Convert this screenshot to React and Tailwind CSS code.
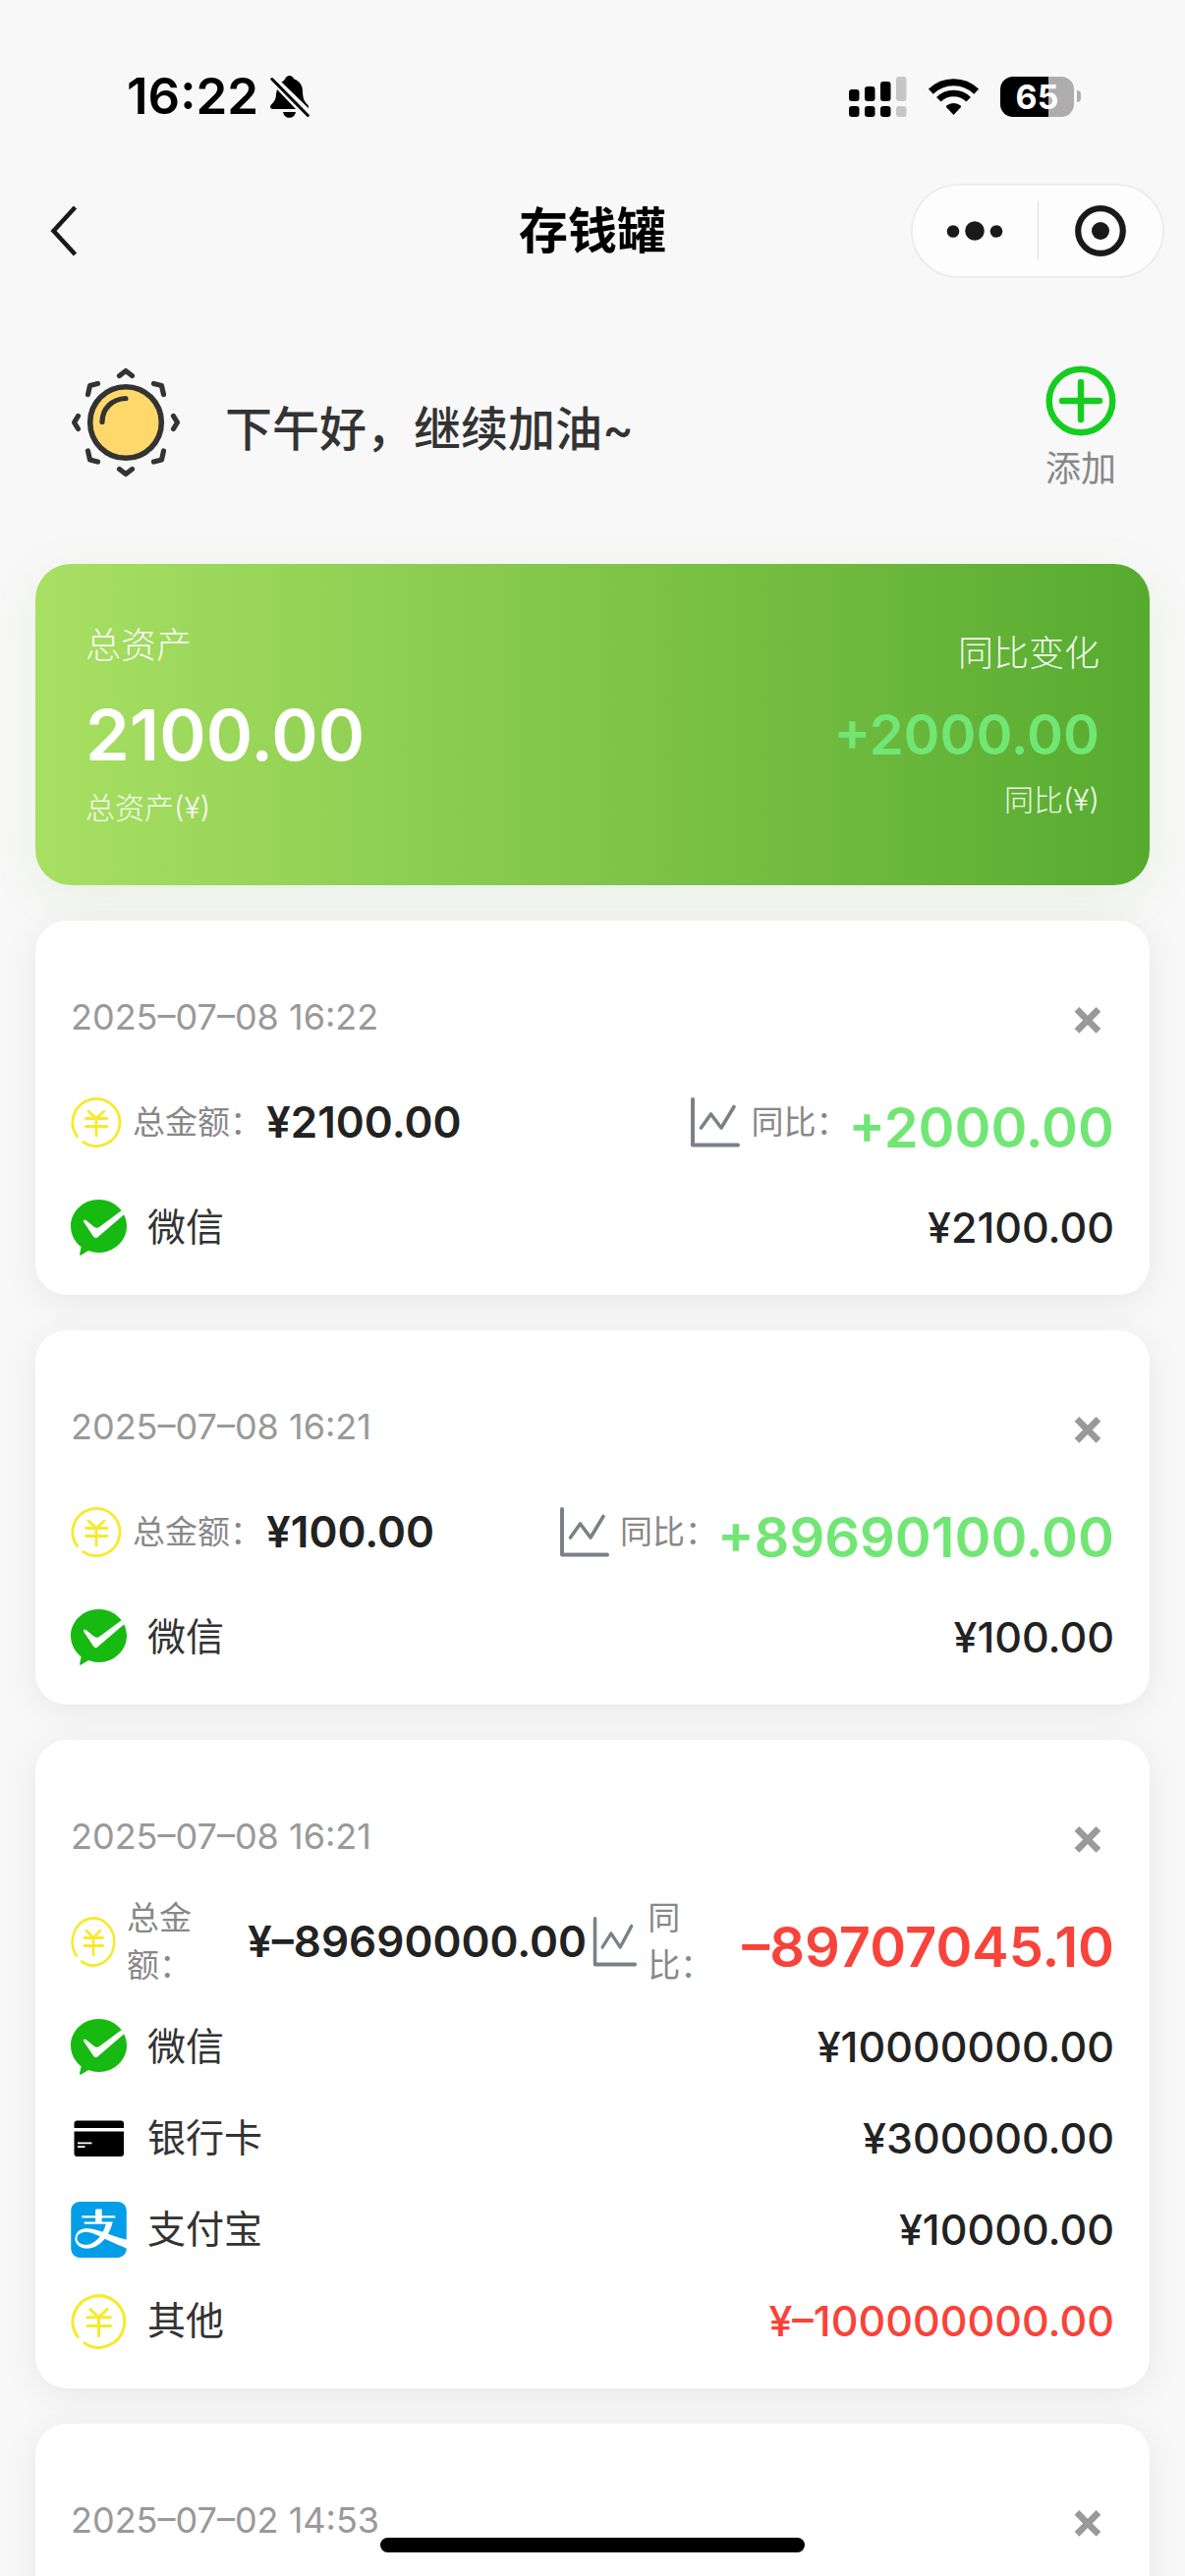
import React from "react";
import { SiAlipay } from "react-icons/si";

const YenIcon = ({ className }) => (
  <svg viewBox="0 0 52 52" preserveAspectRatio="none" className={className} fill="none" stroke="#f6ea2a" strokeWidth="2.8" strokeLinecap="round" aria-hidden="true">
    <path d="M6.6 40.7A24 24 0 1 1 12.7 46.5" />
    <path d="M18 15L26 22.5L34 15M15.5 22.5H37M15.5 30.5H37M26 22.5V40" />
  </svg>
);

const ChartIcon = ({ className }) => (
  <svg viewBox="0 0 52 52" preserveAspectRatio="none" className={className} fill="none" stroke="#7a8186" strokeLinecap="round" strokeLinejoin="round" aria-hidden="true">
    <path strokeWidth="4" d="M4 3V49.5H50" />
    <path strokeWidth="3.6" d="M12.5 32L22.5 18L33 32L46 10.5" />
  </svg>
);

const WechatPayIcon = () => (
  <svg viewBox="0 0 57 57" className="size-[57px]" aria-hidden="true">
    <path fill="#16ba10" d="M28.5 0C44.2 0 57 12.1 57 27S44.2 54 28.5 54C24.8 54 21.3 53.4 18 52.1L10.5 56.6Q9 57.3 9.1 55.5L10.6 48.2C4.1 43.2 0 35.5 0 27C0 12.1 12.8 0 28.5 0Z" />
    <path fill="#fff" d="M13 22.5Q12.8 19.5 15.5 21L23.8 27.8Q26.3 29.5 29 28L51.5 11.2L54.3 15.2L27.5 38.3Q24.9 40.3 23 37.5Z" />
  </svg>
);

const BankCardIcon = () => (
  <svg viewBox="0 0 57 57" className="size-[57px]" aria-hidden="true">
    <rect x="3.5" y="10.5" width="50.5" height="36.5" rx="3" />
    <path fill="#fff" d="M3 18H55V21.4H3ZM7 32.5H21.5V34.2H7ZM7 36.3H14.5V38H7Z" />
  </svg>
);

const channelIcons = {
  微信: <WechatPayIcon />,
  银行卡: <BankCardIcon />,
  支付宝: <SiAlipay className="size-[57px] text-[#029fe8]" aria-hidden="true" />,
  其他: <YenIcon className="size-[57px]" />,
};

const records = [
  { date: "2025–07–08 16:22", total: "¥2100.00", diff: "+2000.00", items: [["微信", "¥2100.00"]] },
  { date: "2025–07–08 16:21", total: "¥100.00", diff: "+89690100.00", items: [["微信", "¥100.00"]] },
  {
    date: "2025–07–08 16:21",
    total: "¥–89690000.00",
    diff: "–89707045.10",
    tight: true,
    items: [
      ["微信", "¥10000000.00"],
      ["银行卡", "¥300000.00"],
      ["支付宝", "¥10000.00"],
      ["其他", "¥–100000000.00"],
    ],
  },
  { date: "2025–07–02 14:53", items: [] },
];

function StatusBar() {
  return (
    <div className="flex h-[187px] shrink-0 items-start justify-between pt-[68px] pr-[106px] pl-[129px]">
      <div className="flex h-[60px] items-center gap-3">
        <span className="text-[51px] leading-[60px] font-semibold text-black">16:22</span>
        <svg viewBox="0 0 40 43" className="h-[43px] w-10" aria-hidden="true">
          <path d="M11.5 6.5C13.5 5.3 14.5 4.8 15 3.5C16 1.2 17.6 0 19.6 0S23.3 1.2 24.3 3.5C30 5.5 33 10 33 16C33.2 24 35 26.5 38 29.5C39 30.7 39.3 32 38.8 33Z" />
          <path d="M7 14L26 34H3C0 34-.7 31.5 1 29.5C4.5 26 5.8 24 6 18.5Z" />
          <path d="M13 37H26C25.3 40.7 22.8 42.8 19.5 42.8S13.7 40.7 13 37Z" />
          <path d="M1.8 3.5L38.3 40.5" stroke="#000" strokeWidth="3" strokeLinecap="round" />
        </svg>
      </div>
      <div className="flex h-[60px] items-center">
        <svg viewBox="0 0 59 41" className="h-[41px] w-[59px]" aria-hidden="true">
          <rect x="0" y="13" width="10.5" height="12" rx="3" />
          <rect x="16" y="10" width="10.5" height="15" rx="3" />
          <rect x="32" y="5" width="10.5" height="20" rx="3" />
          <rect x="0" y="30" width="10.5" height="11" rx="3" />
          <rect x="16" y="30" width="10.5" height="11" rx="3" />
          <rect x="32" y="30" width="10.5" height="11" rx="3" />
          <g fill="#c6c6c6">
            <rect x="48" y="0" width="10.5" height="25" rx="3" />
            <rect x="48" y="30" width="10.5" height="11" rx="3" />
          </g>
        </svg>
        <svg viewBox="0 0 51 38" className="ml-[22px] h-[38px] w-[51px]" fill="none" stroke="#000" aria-hidden="true">
          <path strokeWidth="7" d="M2.3 14.2A33 33 0 0 1 48.7 14.2" />
          <path strokeWidth="6.5" d="M10.3 22.3A21.7 21.7 0 0 1 40.7 22.3" />
          <path fill="#000" stroke="none" d="M25.5 38L17.8 29.8Q18 28.5 19 28Q25.5 24 32 28Q33 28.5 33.2 29.8Z" />
        </svg>
        <div className="ml-[22px] flex h-[41px] w-[75px] items-center justify-center rounded-[13px] bg-linear-to-r from-black from-65% to-[#adadad] to-65%">
          <span className="text-[34px] leading-[41px] font-bold text-white">65</span>
        </div>
        <div className="ml-[3px] h-3 w-1 rounded-r-full bg-[#adadad]" />
      </div>
    </div>
  );
}

function NavBar() {
  return (
    <header className="grid h-24 shrink-0 grid-cols-3 items-center px-[21px]">
      <button type="button" aria-label="返回" className="flex h-16 w-[88px] items-center justify-center">
        <svg viewBox="0 0 28 52" className="h-[52px] w-7" fill="none" stroke="#191919" strokeWidth="4.5" aria-hidden="true">
          <path d="M25.5 2L3.5 26L25.5 50" />
        </svg>
      </button>
      <h1 className="text-center text-[50px] leading-[60px] font-bold text-black">存钱罐</h1>
      <div className="flex h-24 w-[258px] items-center justify-self-end rounded-full border-2 border-[#ededed] bg-[#fdfdfd]">
        <button type="button" aria-label="更多" className="flex h-full flex-1 items-center justify-center">
          <svg viewBox="0 0 58 20" className="h-5 w-[58px]" fill="#191919" aria-hidden="true">
            <circle cx="7" cy="10.5" r="6.3" />
            <circle cx="29" cy="10" r="9.8" />
            <circle cx="51" cy="10.5" r="6.3" />
          </svg>
        </button>
        <div className="h-[60px] w-px bg-[#dcdcdc]" />
        <button type="button" aria-label="关闭" className="flex h-full flex-1 items-center justify-center">
          <svg viewBox="0 0 52 52" className="size-[52px]" aria-hidden="true">
            <circle cx="26" cy="26" r="22.8" fill="none" stroke="#191919" strokeWidth="6.2" />
            <circle cx="26" cy="26" r="9" fill="#191919" />
          </svg>
        </button>
      </div>
    </header>
  );
}

function Greeting() {
  return (
    <section className="flex h-[291px] items-start justify-between px-[70px] pt-[89px]">
      <div className="flex items-start gap-[43px]">
        <svg viewBox="0 0 116 116" className="size-[116px]" fill="none" stroke="#333" strokeWidth="5.2" strokeLinecap="round" strokeLinejoin="round" aria-hidden="true">
          <circle cx="58" cy="58" r="36.3" fill="#ffd86b" strokeWidth="5.6" />
          <path d="M34 57.5C34 44 44 34 58 33.5" />
          <path d="M51.5 10.5L58 5.5L64.5 10.5M51.5 105.5L58 110.5L64.5 105.5" />
          <path d="M9.5 51.5L5.5 58L9.5 64.5M106.5 51.5L110.5 58L106.5 64.5" />
          <path d="M19.5 29.5L21.5 20.5L29.5 18.5M86.5 18.5L94.5 20.5L96.5 29.5M19.5 87L21.5 96L29.5 98M86.5 98L94.5 96L96.5 87" />
        </svg>
        <p className="text-[48px] leading-[130px] font-medium text-[#333]">下午好，继续加油~</p>
      </div>
      <button type="button" className="flex flex-col items-center gap-[6px]">
        <svg viewBox="0 0 72 72" className="size-[72px]" fill="none" stroke="#15cd1f" strokeWidth="6.4" strokeLinecap="round" aria-hidden="true">
          <circle cx="36" cy="36" r="32.3" />
          <path d="M17 36H55M36 17V55" />
        </svg>
        <span className="text-[36px] leading-[54px] text-[#888]">添加</span>
      </button>
    </section>
  );
}

function Summary() {
  return (
    <section className="mx-9 flex items-center justify-between rounded-[36px] bg-linear-to-r from-[#a8e063] to-[#56ab2f] px-[51px] py-[58px] text-white shadow-[0_12px_48px_rgba(86,171,47,0.1)]">
      <div>
        <p className="text-[36px] leading-[50px] font-light text-white/95">总资产</p>
        <p className="mt-6 text-[72px] leading-[84px] font-semibold">2100.00</p>
        <p className="mt-[11px] text-[30px] leading-[42px] font-light text-white/90">总资产(¥)</p>
      </div>
      <div className="text-right">
        <p className="text-[36px] leading-[50px] font-light text-white/95">同比变化</p>
        <p className="mt-6 text-[56px] leading-[68px] font-semibold text-[#71e675]">+2000.00</p>
        <p className="mt-[11px] text-[30px] leading-[42px] font-light text-white/90">同比(¥)</p>
      </div>
    </section>
  );
}

function RecordTotals({ total, diff, tight }) {
  const iconClass = tight ? "h-[52px] w-[46px] shrink-0" : "size-[52px] shrink-0";
  const diffColor = diff.startsWith("+") ? "text-[#71e675]" : "text-[#f8433a]";
  return (
    <div className="flex h-24 items-center justify-between">
      <div className="flex items-center">
        <YenIcon className={iconClass} />
        <span className={`ml-[11px] text-[33px] leading-[48px] text-[#888] ${tight ? "w-[119px]" : ""}`}>总金额：</span>
        <strong className="ml-1 text-[44px] leading-[54px] font-semibold whitespace-nowrap text-[#222]">{total}</strong>
      </div>
      <div className="flex items-center">
        <ChartIcon className={iconClass} />
        <span className={`ml-[11px] text-[33px] leading-[48px] text-[#888] ${tight ? "w-24" : ""}`}>同比：</span>
        <strong className={`pt-3 text-[56px] leading-[68px] font-semibold whitespace-nowrap ${diffColor}`}>{diff}</strong>
      </div>
    </div>
  );
}

function RecordCard({ record }) {
  return (
    <article className="shrink-0 rounded-[32px] bg-white px-9 pt-[72px] pb-9 shadow-[0_6px_36px_rgba(0,0,0,0.07)]">
      <div className="mb-[33px] flex h-[52px] items-center justify-between">
        <time className="text-[36px] leading-[52px] text-[#999]">{record.date}</time>
        <button type="button" aria-label="删除" className="flex h-[52px] w-[54px] items-center justify-center text-[52px] leading-[52px] font-bold text-[#999]">
          ×
        </button>
      </div>
      {record.total && <RecordTotals total={record.total} diff={record.diff} tight={record.tight} />}
      {record.items.length > 0 && (
        <ul className="mt-[26px] flex flex-col gap-[27px]">
          {record.items.map(([name, amount]) => (
            <li key={name} className="flex h-[66px] items-center">
              {channelIcons[name]}
              <span className="ml-[21px] text-[39px] leading-[54px] text-[#333]">{name}</span>
              <span className={`ml-auto text-[43px] leading-[54px] font-medium ${amount.includes("–") ? "text-[#f8433a]" : "text-[#222]"}`}>
                {amount}
              </span>
            </li>
          ))}
        </ul>
      )}
    </article>
  );
}

export default function App() {
  return (
    <div lang="zh-CN" className="relative flex h-screen flex-col overflow-hidden bg-[#f8f8f8] font-[Inter,'Noto_Sans_CJK_SC',sans-serif]">
      <StatusBar />
      <NavBar />
      <main className="flex flex-col">
        <Greeting />
        <Summary />
        <div className="flex flex-col gap-9 px-9 pt-9">
          {records.map((record, i) => (
            <RecordCard key={i} record={record} />
          ))}
        </div>
      </main>
      <div className="absolute bottom-6 left-1/2 h-[15px] w-[432px] -translate-x-1/2 rounded-full bg-black" />
    </div>
  );
}
